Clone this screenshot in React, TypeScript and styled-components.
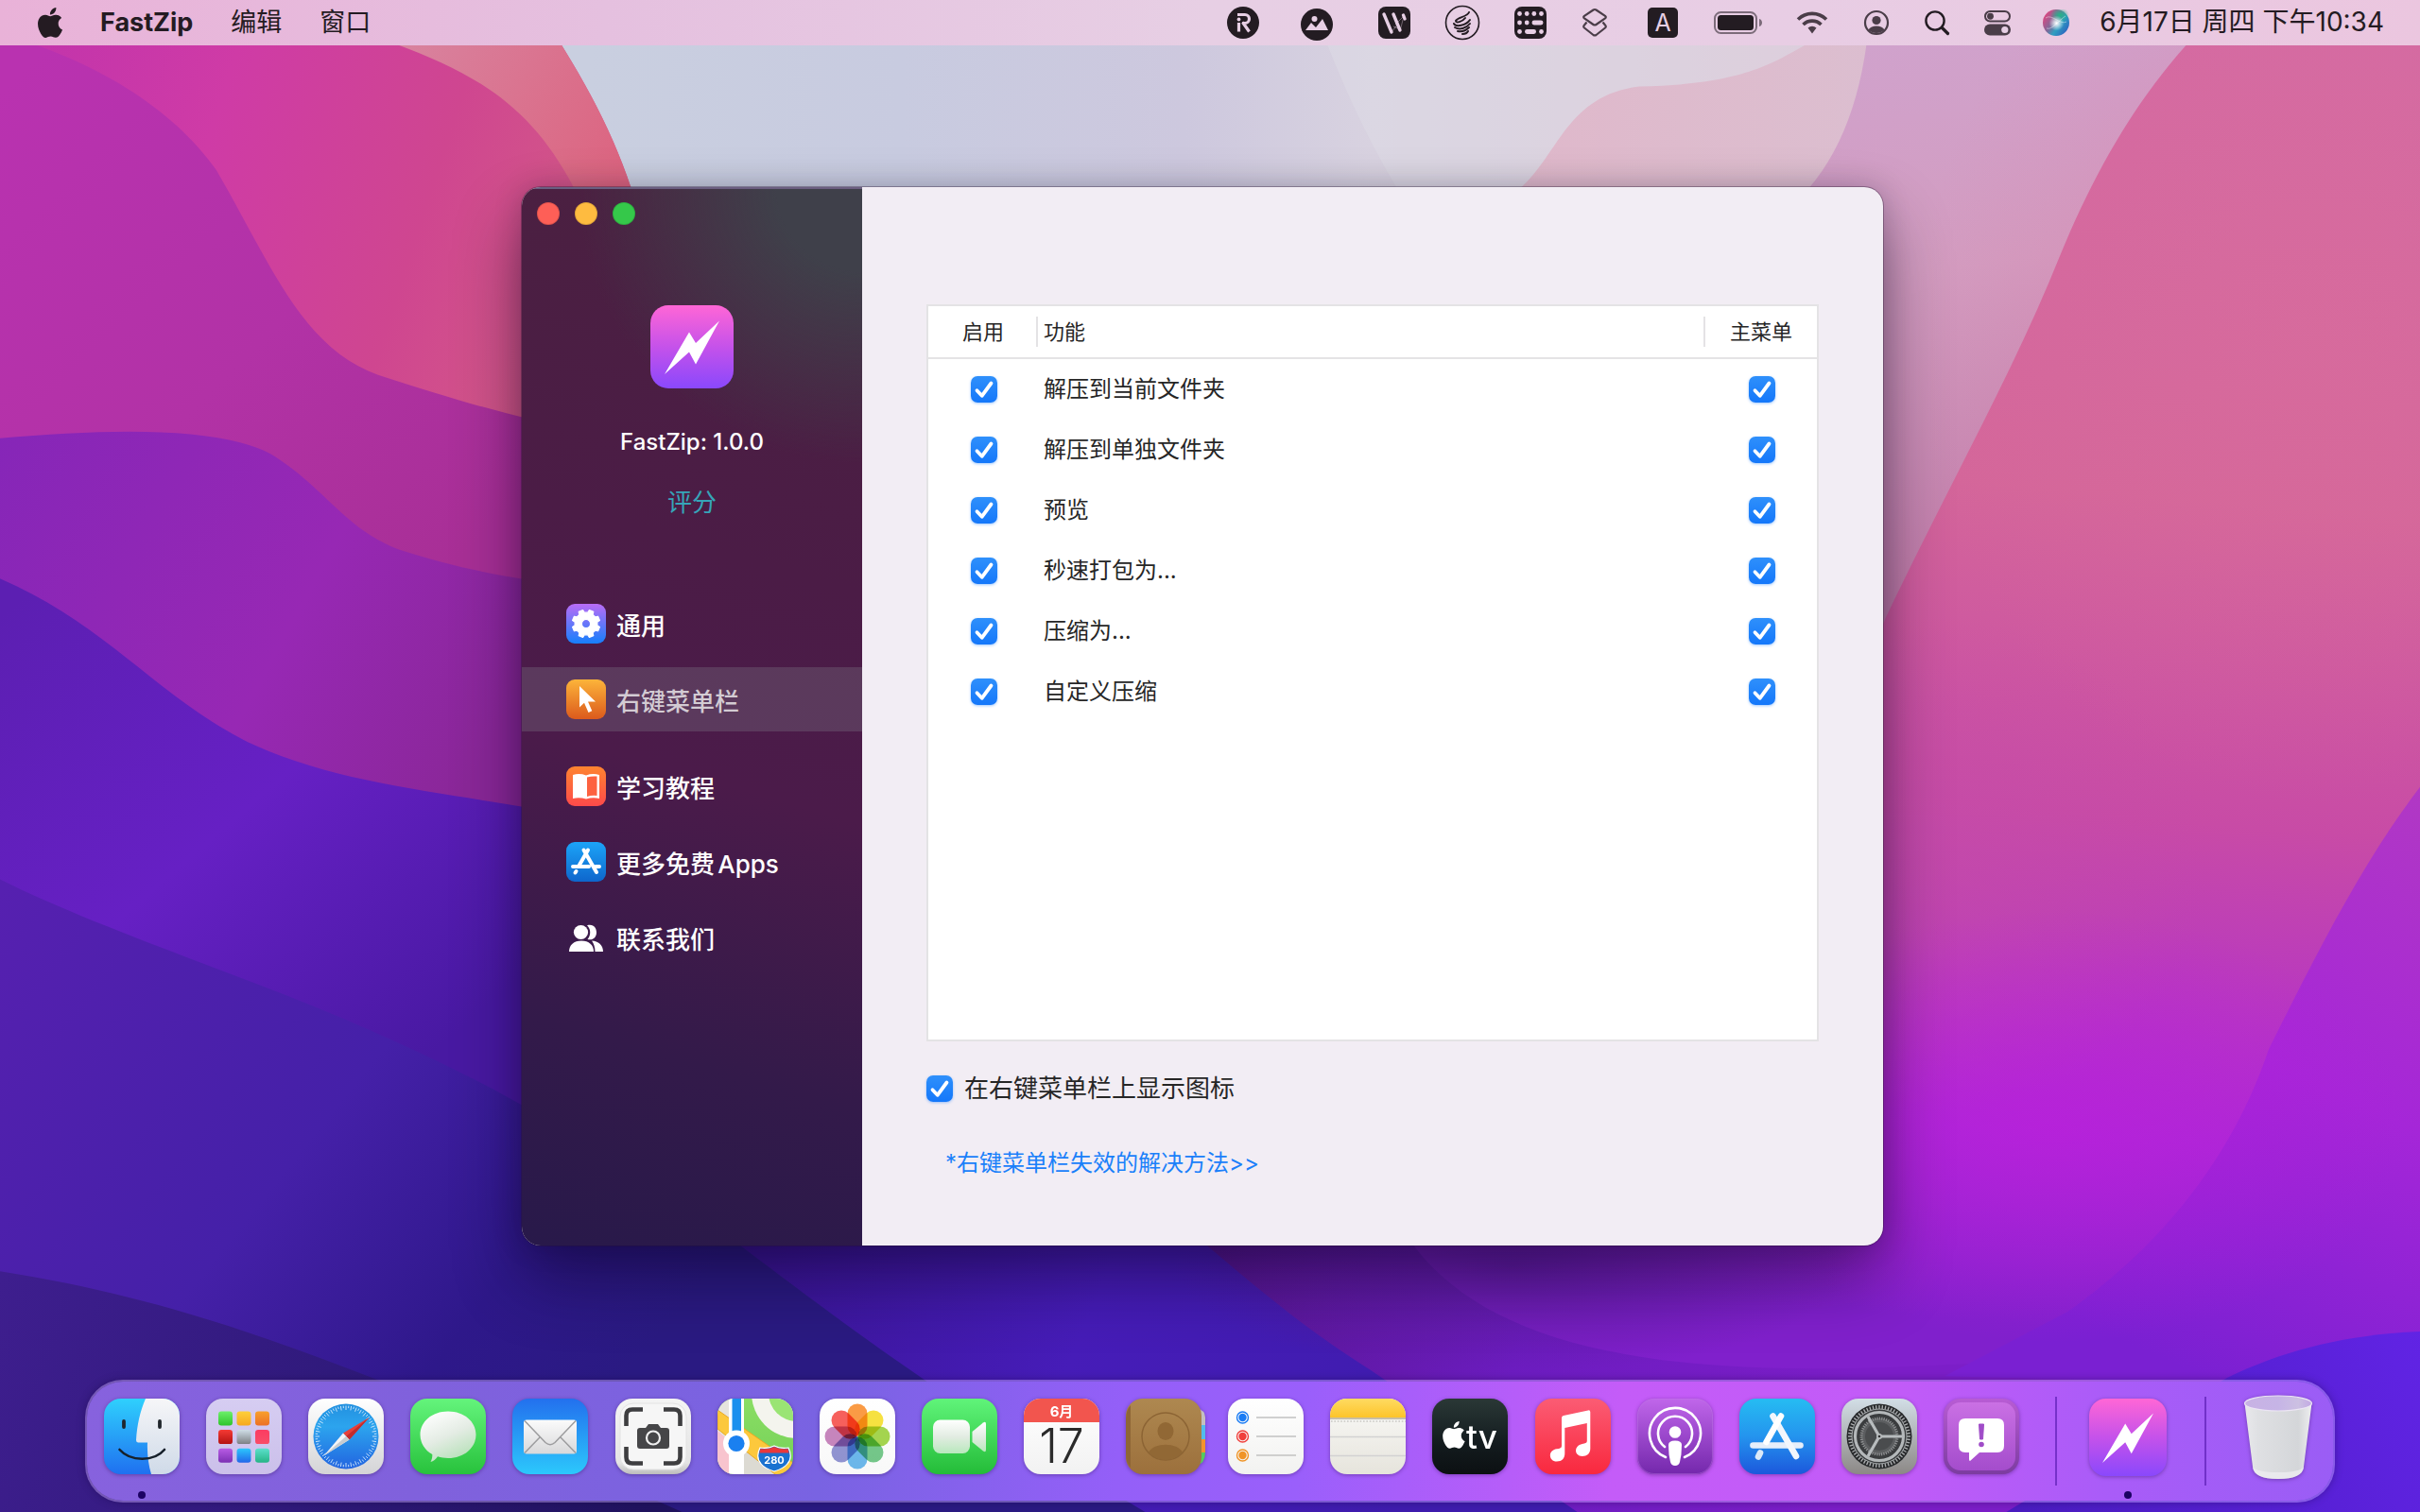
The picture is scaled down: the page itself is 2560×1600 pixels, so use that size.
import React, { useState } from "react";
import styled, { createGlobalStyle, css } from "styled-components";

const GlobalStyle = createGlobalStyle`
  *, *::before, *::after { box-sizing: border-box; }
  html, body { margin: 0; padding: 0; height: 100%; overflow: hidden; }
  body, button, input {
    font-family: Inter, "Noto Sans CJK SC", sans-serif;
  }
  button { border: 0; padding: 0; background: none; color: inherit; cursor: default; }
`;

/* ---------- desktop ---------- */

const Desktop = styled.div`
  position: relative;
  isolation: isolate;
  display: flex;
  flex-direction: column;
  min-height: 100vh;
  overflow: hidden;
`;

const WallpaperSvg = styled.svg`
  position: absolute;
  inset: 0;
  z-index: -1;
  width: 100%;
  height: 100%;
`;

const Stage = styled.main`
  flex: 1;
  display: flex;
  align-items: center;
  justify-content: center;
  padding: 8px 16px 0 0;
`;

type Stop = [number, string, number?];
const Lin = ({ id, v, stops, user }: { id: string; v?: number[]; stops: Stop[]; user?: boolean }) => {
  const [x1, y1, x2, y2] = v || [0, 0, 0, 1];
  return (
    <linearGradient id={id} x1={x1} y1={y1} x2={x2} y2={y2} gradientUnits={user ? "userSpaceOnUse" : "objectBoundingBox"}>
      {stops.map(([o, c, a], i) => (
        <stop key={i} offset={o} stopColor={c} stopOpacity={a ?? 1} />
      ))}
    </linearGradient>
  );
};
const Glow = ({ id, c, a = 1 }: { id: string; c: string; a?: number }) => (
  <radialGradient id={id}>
    <stop offset="0" stopColor={c} stopOpacity={a} />
    <stop offset="0.5" stopColor={c} stopOpacity={a * 0.5} />
    <stop offset="1" stopColor={c} stopOpacity={0} />
  </radialGradient>
);

const Wallpaper = () => (
  <WallpaperSvg viewBox="0 0 1568 980" preserveAspectRatio="xMidYMid slice" aria-hidden="true">
    <defs>
      <Lin id="wTop" user v={[380, 0, 1400, 0]} stops={[[0, "#c9cfe0"], [0.2, "#c8cbe0"], [0.38, "#cdc8de"], [0.5, "#d8d2e0"], [0.75, "#dcc3d4"], [1, "#d0a8d2"]]} />
      <Lin id="wPinkTop" user v={[0, 30, 400, 160]} stops={[[0, "#c033ac"], [0.35, "#cf3ba6"], [0.7, "#cf4690"], [1, "#d45c86"]]} />
      <Lin id="wCoral" user v={[250, 30, 400, 120]} stops={[[0, "#d884a0"], [1, "#dc6480"]]} />
      <Lin id="wA" user v={[0, 60, 300, 360]} stops={[[0, "#b932b0"], [0.55, "#b232a6"], [1, "#a82f96"]]} />
      <Lin id="wB" user v={[0, 280, 330, 460]} stops={[[0, "#8626b8"], [0.6, "#9728b4"], [1, "#8a2798"]]} />
      <Lin id="wC" user v={[0, 400, 260, 700]} stops={[[0, "#5c1fb2"], [0.5, "#6620c4"], [1, "#4819a2"]]} />
      <Lin id="wD" user v={[0, 580, 400, 900]} stops={[[0, "#5620b0"], [0.5, "#4520a8"], [0.8, "#2e188a"], [1, "#2a1a82"]]} />
      <Lin id="wE" user v={[0, 830, 420, 980]} stops={[[0, "#3e1e8e"], [0.5, "#301a7c"], [1, "#20135e"]]} />
      <Lin id="wF" user v={[480, 800, 900, 980]} stops={[[0, "#3a1596"], [0.5, "#461cb8"], [1, "#3f1cae"]]} />
      <Lin id="wG" user v={[780, 800, 1200, 900]} stops={[[0, "#561690"], [0.5, "#6c1cc0"], [1, "#7c1ec8"]]} />
      <Lin id="wRight" user v={[1400, 30, 1330, 860]} stops={[[0, "#d46aa2"], [0.35, "#d4669a"], [0.6, "#c84ba6"], [0.85, "#aa28d6"], [1, "#8020cc"]]} />
      <Lin id="wRight2" user v={[1568, 510, 1400, 880]} stops={[[0, "#b138c4"], [0.5, "#a526d8"], [1, "#7a20d2"]]} />
      <Lin id="wBlue" user v={[1300, 960, 1568, 830]} stops={[[0, "#4a1cc0"], [1, "#6224e6"]]} />
      <Lin id="wMid" user v={[1210, 30, 1260, 400]} stops={[[0, "#d0a2cc"], [0.4, "#d39cc0"], [1, "#c07aa8"]]} />
      <Lin id="wPale" user v={[1000, 60, 1200, 60]} stops={[[0, "#e0b2c6"], [1, "#dcbacc"]]} />
      <Glow id="wGlow1" c="#dc709c" a={0.35} />
      <Glow id="wGlow2" c="#bc1edc" a={0.65} />
      <Glow id="wGlow3" c="#5a1a9c" a={0.8} />
      <Glow id="wGlow4" c="#c44ca8" a={0.6} />
    </defs>
    <rect width="1568" height="980" fill="url(#wTop)" />
    <path d="M860 29 Q880 80 905 122 V400 H1300 V0 H846Z" fill="#dedce6" opacity="0.5" />
    <path d="M985 122 C1010 100 1015 62 1062 56 C1130 55 1150 40 1170 29 V0 H1300 V400 H960Z" fill="url(#wPale)" opacity="0.8" />
    <path d="M1212 0 Q1208 80 1172 122 V800 H1460 V0Z" fill="url(#wMid)" />
    {/* left ridges */}
    <path d="M0 0 H345 C375 45 395 80 409 122 V500 H0Z" fill="url(#wPinkTop)" />
    <path d="M200 0 H345 C375 45 395 80 409 122 H372 C345 70 310 48 255 28Z" fill="url(#wCoral)" />
    <path d="M0 22 C60 38 112 70 140 110 C175 170 195 225 245 243 C285 256 315 265 345 272 V560 H0Z" fill="url(#wA)" />
    <path d="M0 284 C70 278 140 276 175 294 C210 315 222 342 258 356 C290 366 315 372 345 376 V600 H0Z" fill="url(#wB)" />
    <path d="M0 375 C70 405 105 455 165 483 C220 508 290 514 345 524 V800 H0Z" fill="url(#wC)" />
    <path d="M0 570 C60 600 150 630 210 655 C270 680 310 700 345 720 L480 790 L780 990 H0Z" fill="url(#wD)" />
    {/* foreground hills */}
    <path d="M470 800 C520 838 560 868 600 895 L742 980 H1568 V760 H470Z" fill="url(#wF)" />
    <path d="M0 824 C90 838 160 862 228 888 C300 915 370 948 442 980 H0Z" fill="url(#wE)" />
    <path d="M770 797 C820 840 850 864 888 888 L1022 980 H1568 V700 H770Z" fill="url(#wG)" />
    {/* right ridges */}
    <path d="M1446 0 C1395 45 1362 100 1335 165 C1305 240 1265 310 1222 400 L1180 500 V780 H900 C940 870 1060 895 1250 885 L1568 870 V0Z" fill="url(#wRight)" />
    <path d="M1568 510 C1530 560 1500 620 1470 680 C1450 740 1410 800 1340 850 L1260 892 L1568 900Z" fill="url(#wRight2)" />
    <ellipse cx="1500" cy="220" rx="260" ry="300" fill="url(#wGlow1)" />
    <ellipse cx="1250" cy="560" rx="180" ry="160" fill="url(#wGlow4)" />
    <ellipse cx="1330" cy="730" rx="230" ry="140" fill="url(#wGlow2)" />
    <ellipse cx="980" cy="820" rx="220" ry="70" fill="url(#wGlow3)" />
    <path d="M1568 863 C1520 865 1480 875 1443 893 L1300 980 H1568Z" fill="url(#wBlue)" />
  </WallpaperSvg>
);

/* ---------- menu bar ---------- */

const MenuBar = styled.header`
  display: flex;
  align-items: center;
  justify-content: space-between;
  height: 48px;
  padding: 0 38px 0 40px;
  color: #241b22;
  background: linear-gradient(90deg, #e9b2d8 0%, #e5c0df 25%, #e7cfe4 50%, #e8cde4 75%, #ebc6df 100%);
`;

const MenuGroup = styled.nav`
  display: flex;
  align-items: center;
  height: 44px;
`;

const MenuButton = styled.button<{ $strong?: boolean }>`
  margin-left: 40px;
  font-size: 27px;
  line-height: 44px;
  font-weight: ${(p) => (p.$strong ? 700 : 400)};
`;

const StatusGroup = styled.div`
  display: flex;
  align-items: center;
  height: 48px;
`;

const StatusItem = styled.button<{ $slot: number }>`
  display: flex;
  align-items: center;
  justify-content: center;
  width: ${(p) => p.$slot}px;
  height: 48px;
`;

const Clock = styled.time`
  padding-left: 14px;
  font-size: 28px;
  line-height: 44px;
  margin-bottom: 2px;
  white-space: nowrap;
`;

const APPLE =
  "M12.152 6.896c-.948 0-2.415-1.078-3.96-1.04-2.04.027-3.91 1.183-4.961 3.014-2.117 3.675-.546 9.103 1.519 12.09 1.013 1.454 2.208 3.09 3.792 3.039 1.52-.065 2.09-.987 3.935-.987 1.831 0 2.35.987 3.96.948 1.637-.026 2.676-1.48 3.676-2.948 1.156-1.688 1.636-3.325 1.662-3.415-.039-.013-3.182-1.221-3.22-4.857-.026-3.04 2.48-4.494 2.597-4.559-1.429-2.09-3.623-2.324-4.39-2.376-2-.156-3.675 1.09-4.61 1.09zM15.53 3.83c.843-1.012 1.4-2.427 1.245-3.83-1.207.052-2.662.805-3.532 1.818-.78.896-1.454 2.338-1.273 3.714 1.338.104 2.715-.688 3.559-1.701";

const AppleLogo = () => (
  <svg width="26" height="32" viewBox="2.2 0 19.6 24" fill="#241b22" aria-hidden="true">
    <path d={APPLE} />
  </svg>
);

const INK = "#231c22";
const SOFT = "#4a3d48";
const PAPER = "#e7cfe4";

const statusIcons: { name: string; slot: number; art: React.ReactNode }[] = [
  {
    name: "录屏",
    slot: 64,
    art: (
      <svg width="36" height="36" viewBox="0 0 36 36">
        <circle cx="18" cy="18" r="17" fill={INK} />
        <path d="M12 9.500h8a4.500 4.500 0 0 1 0 9h-3M13.500 18v9.500M17.500 17.500L24.500 27.500" fill="none" stroke={PAPER} strokeWidth="3.200" />
        <circle cx="13.500" cy="14.500" r="1.900" fill={PAPER} />
      </svg>
    ),
  },
  {
    name: "图片",
    slot: 92,
    art: (
      <svg width="36" height="40" viewBox="0 0 36 40">
        <circle cx="18" cy="22" r="17" fill={INK} />
        <circle cx="15.500" cy="16" r="3" fill={PAPER} />
        <path d="M6 28l6-8 5 5 7-9 6 12z" fill={PAPER} />
      </svg>
    ),
  },
  {
    name: "壁纸",
    slot: 72,
    art: (
      <svg width="36" height="36" viewBox="0 0 36 36">
        <rect x="1" y="1" width="34" height="34" rx="8" fill={INK} />
        <path d="M7 9l8 19M17 9l7 17" stroke={PAPER} strokeWidth="3.400" strokeLinecap="round" />
        <path d="M29 10l-10 10M15 28l7-9M24 27l3-12M17 22l7 3" stroke={PAPER} strokeWidth="0.800" strokeOpacity="0.500" fill="none" />
        <path d="M27.500 10l1.500 4" stroke={PAPER} strokeWidth="3.400" strokeLinecap="round" />
      </svg>
    ),
  },
  {
    name: "清理",
    slot: 72,
    art: (
      <svg width="38" height="38" viewBox="0 0 38 38" fill="none" stroke={INK}>
        <circle cx="19" cy="19" r="17.500" strokeWidth="1.600" />
        <path d="M26 8c-2 5-12 5-14 9 0 3 7 1 10-3M10 20c2 4 13 2 17-4M11 24c5 3 12 1 16-4M14 28c5 1 9-1 12-4M19 31c3 0 5-1 6-3" strokeWidth="2" strokeLinecap="round" />
      </svg>
    ),
  },
  {
    name: "键盘",
    slot: 72,
    art: (
      <svg width="36" height="36" viewBox="0 0 36 36">
        <rect x="1" y="1" width="34" height="34" rx="8" fill={INK} />
        <g fill={PAPER}>
          {[6.5, 14.2, 21.8, 29.5].map((x) => (
            <circle key={x} cx={x} cy="8.500" r="2.400" />
          ))}
          <circle cx="6.500" cy="18" r="2.400" />
          <circle cx="14.200" cy="18" r="2.400" />
          <rect x="19.500" y="15.600" width="12" height="4.800" rx="2.400" />
          <circle cx="6.500" cy="27.500" r="2.400" />
          <rect x="12" y="25.100" width="12" height="4.800" rx="2.400" />
          <circle cx="29.500" cy="27.500" r="2.400" />
        </g>
      </svg>
    ),
  },
  {
    name: "图层",
    slot: 64,
    art: (
      <svg width="30" height="32" viewBox="0 0 30 32" fill="none" stroke={SOFT} strokeWidth="2.200" strokeLinejoin="round">
        <path d="M13.500 2.500L4 8.800q-1.600 1.300 0 2.600l9.500 6.600q1.500 1 3 0L26 11.400q1.600-1.300 0-2.600L16.500 2.500q-1.500-1-3 0z" />
        <path d="M6.500 15.500L4 18.500q-1.600 1.600 0 3l9.500 7.500q1.500 1 3 0l9.500-7.500q1.600-1.400 0-3l-2.500-3" />
      </svg>
    ),
  },
  {
    name: "输入法",
    slot: 80,
    art: (
      <svg width="32" height="32" viewBox="0 0 32 32">
        <rect width="32" height="32" rx="5" fill={INK} />
        <text x="16" y="25" textAnchor="middle" fontFamily="Inter, sans-serif" fontSize="25" fill={PAPER}>A</text>
      </svg>
    ),
  },
  {
    name: "电池",
    slot: 80,
    art: (
      <svg width="52" height="24" viewBox="0 0 52 24">
        <rect x="1" y="1" width="44" height="22" rx="6.500" fill="none" stroke={INK} strokeOpacity="0.55" strokeWidth="2" />
        <rect x="4" y="4" width="38" height="16" rx="3.500" fill={INK} />
        <path d="M48 8v8c4-1 4-7 0-8z" fill={INK} opacity="0.550" />
      </svg>
    ),
  },
  {
    name: "无线网络",
    slot: 76,
    art: (
      <svg width="34" height="26" viewBox="0 0 34 26" fill="none" stroke={SOFT} strokeWidth="3.600">
        <path d="M2 9.500a21.500 21.500 0 0 1 30 0" />
        <path d="M7.500 15a13.600 13.600 0 0 1 19 0" />
        <path d="M12.500 18.500a7 7 0 0 1 9 0L17 24.500z" fill={SOFT} stroke="none" />
      </svg>
    ),
  },
  {
    name: "用户",
    slot: 60,
    art: (
      <svg width="28" height="28" viewBox="0 0 28 28">
        <circle cx="14" cy="14" r="12" fill="none" stroke={SOFT} strokeWidth="2.200" />
        <circle cx="14" cy="11.500" r="4.600" fill={SOFT} />
        <path d="M5.500 21.500c3-5.500 14-5.500 17 0a12 12 0 0 1-17 0z" fill={SOFT} />
      </svg>
    ),
  },
  {
    name: "搜索",
    slot: 68,
    art: (
      <svg width="28" height="28" viewBox="0 0 28 28" fill="none" stroke={INK} strokeLinecap="round">
        <circle cx="12" cy="12" r="9.600" strokeWidth="2.400" />
        <path d="M19.500 19.500l6 6" strokeWidth="3.200" />
      </svg>
    ),
  },
  {
    name: "控制中心",
    slot: 60,
    art: (
      <svg width="28" height="28" viewBox="0 0 28 28">
        <rect x="1" y="2" width="26" height="10.500" rx="5.250" fill="none" stroke={SOFT} strokeWidth="2" />
        <circle cx="6.500" cy="7.250" r="3.400" fill={SOFT} />
        <rect x="0" y="15.500" width="28" height="12" rx="6" fill={SOFT} />
        <circle cx="21.800" cy="21.500" r="3.600" fill={PAPER} />
      </svg>
    ),
  },
  {
    name: "Siri",
    slot: 64,
    art: (
      <svg width="28" height="28" viewBox="0 0 28 28">
        <defs>
          <Lin id="siriBg" v={[0, 0.2, 1, 0.9]} stops={[[0, "#e8437e"], [0.4, "#7c6a9a"], [0.6, "#2f9fc0"], [1, "#2c55c0"]]} />
          <Glow id="siriGreen" c="#22b488" />
          <Glow id="siriWhite" c="#ffffff" />
        </defs>
        <circle cx="14" cy="14" r="14" fill="url(#siriBg)" />
        <ellipse cx="18" cy="6" rx="10" ry="8" fill="url(#siriGreen)" />
        <circle cx="14.500" cy="14.500" r="8" fill="url(#siriWhite)" />
        <path d="M3 9c6-5 16 8 22 4M4 20c6 2 12-8 20-13" stroke="#fff" strokeOpacity="0.4" fill="none" />
      </svg>
    ),
  },
];

/* ---------- window ---------- */

const Window = styled.section`
  display: flex;
  width: 1440px;
  max-width: 100%;
  min-height: 1120px;
  border-radius: 20px;
  overflow: hidden;
  background: #f2edf4;
  box-shadow: 0 0 0 1px rgba(40, 20, 50, 0.35), 0 36px 70px rgba(10, 0, 30, 0.45), 0 0 30px rgba(10, 0, 30, 0.2);
`;

const Sidebar = styled.aside`
  flex: 0 0 360px;
  display: flex;
  flex-direction: column;
  border-top: 2px solid rgba(255, 255, 255, 0.3);
  background:
    radial-gradient(ellipse 300px 290px at 100% 0, #3f404a 30%, rgba(63, 64, 74, 0) 100%),
    linear-gradient(196deg, #4b2140 0%, #4b1c46 35%, #4b1b4a 55%, #331a4a 80%, #28194a 100%);
`;

const TrafficLights = styled.div`
  display: flex;
  gap: 16px;
  padding: 14px 16px 0;
`;

const Light = styled.button<{ $color: string }>`
  width: 24px;
  height: 24px;
  border-radius: 50%;
  background: ${(p) => p.$color};
  box-shadow: inset 0 0 0 1px rgba(0, 0, 0, 0.12);
`;

const About = styled.div`
  display: flex;
  flex-direction: column;
  align-items: center;
  padding-top: 85px;
  color: #fff;
`;

const Version = styled.p`
  margin: 41px 0 0;
  font-size: 24px;
  line-height: 32px;
  font-weight: 500;
`;

const RateLink = styled.a`
  margin-top: 28px;
  font-size: 26px;
  line-height: 40px;
  color: #36a5b9;
  text-decoration: none;
`;

const NavList = styled.nav`
  display: flex;
  flex-direction: column;
  gap: 12px;
  margin-top: 74px;
`;

const NavItem = styled.button<{ $active?: boolean; $spaced?: boolean }>`
  display: flex;
  align-items: center;
  gap: 11px;
  height: 68px;
  padding-left: 47px;
  color: #fff;
  font-size: 26px;
  font-weight: 500;
  line-height: 40px;
  text-autospace: normal;
  ${(p) => p.$spaced && css`margin-top: 12px;`}
  ${(p) =>
    p.$active &&
    css`
      color: #d3cbd3;
      background: rgba(128, 128, 138, 0.3);
    `}
`;

const NavLabel = styled.span`
  padding-top: 6px;
`;

const Panel = styled.div`
  flex: 1;
  display: flex;
  flex-direction: column;
  align-items: flex-start;
  min-width: 0;
  padding: 124px 68px 64px;
  color: #262626;
`;

const TableFrame = styled.div`
  align-self: stretch;
  min-height: 780px;
  border: 2px solid #e4e3e5;
  background: #fff;
`;

const Table = styled.table`
  width: 100%;
  border-collapse: separate;
  border-spacing: 0;
  table-layout: fixed;
`;

const Th = styled.th<{ $w?: number; $divider?: boolean; $center?: boolean }>`
  width: ${(p) => (p.$w ? `${p.$w}px` : "auto")};
  height: 56px;
  padding: ${(p) => (p.$center ? "0" : "0 0 0 6px")};
  border-bottom: 2px solid #e4e3e5;
  font-size: 22px;
  line-height: 32px;
  font-weight: 400;
  text-align: ${(p) => (p.$center ? "center" : "left")};
  ${(p) =>
    p.$divider &&
    css`
      background: linear-gradient(#e4e3e5, #e4e3e5) right center / 2px 32px no-repeat;
    `}
`;

const Td = styled.td<{ $center?: boolean }>`
  height: 64px;
  padding: 0 0 0 ${(p) => (p.$center ? 2 : 6)}px;
  font-size: 24px;
  line-height: 32px;
  text-align: ${(p) => (p.$center ? "center" : "left")};
`;

const tick =
  "url(\"data:image/svg+xml,%3Csvg xmlns='http://www.w3.org/2000/svg' viewBox='0 0 28 28'%3E%3Cpath d='M6.500 15.200l5.200 5.600L21.500 7.500' fill='none' stroke='white' stroke-width='3.800' stroke-linecap='round' stroke-linejoin='round'/%3E%3C/svg%3E\")";

const CheckBox = styled.input.attrs({ type: "checkbox" })`
  appearance: none;
  display: block;
  flex: none;
  width: 28px;
  height: 28px;
  margin: 0;
  border-radius: 7px;
  background: #fff;
  box-shadow: inset 0 0 0 1px #c8c6ca;
  &:checked {
    background: ${tick}, linear-gradient(#2f90fb, #1477fa);
    box-shadow: 0 1px 3px rgba(20, 119, 250, 0.4);
  }
`;

const CenteredCheck = styled(CheckBox)`
  margin: 0 auto;
`;

const OptionLabel = styled.label`
  display: flex;
  align-items: center;
  gap: 12px;
  margin-top: 30px;
  font-size: 26px;
  line-height: 40px;
`;

const HelpLink = styled.a`
  margin: 41px 0 0 20px;
  color: #1a80fa;
  font-size: 24px;
  line-height: 36px;
  text-decoration: none;
`;

const Bolt = ({ size, id }: { size: number; id: string }) => (
  <svg width={size} height={size} viewBox="0 0 88 88" aria-hidden="true">
    <defs>
      <Lin id={id} stops={[[0, "#ff66d6"], [0.5, "#c552ea"], [1, "#8a48fc"]]} />
    </defs>
    <rect width="88" height="88" rx="19" fill={`url(#${id})`} />
    <path d="M73 16.500L48 62.500 41 49.500 15 73 41 28.500 48 40z" fill="#fff" />
  </svg>
);

const gearPath = (() => {
  const pts: string[] = [];
  for (let i = 0; i < 8; i++) {
    const a = (i * Math.PI) / 4 + Math.PI / 8;
    [[-0.24, 12], [-0.16, 14.8], [0.16, 14.8], [0.24, 12]].forEach(([d, r]) => {
      pts.push(`${(21 + r * Math.cos(a + d)).toFixed(2)} ${(21 + r * Math.sin(a + d)).toFixed(2)}`);
    });
  }
  return `M${pts.join("L")}Z M25.600 21a4.600 4.600 0 1 0-9.200 0a4.600 4.600 0 1 0 9.200 0Z`;
})();

const NavTile = ({ id, from, to, children }: { id: string; from: string; to: string; children: React.ReactNode }) => (
  <svg width="42" height="42" viewBox="0 0 42 42" aria-hidden="true">
    <defs>
      <Lin id={id} stops={[[0, from], [1, to]]} />
    </defs>
    <rect width="42" height="42" rx="9" fill={`url(#${id})`} />
    {children}
  </svg>
);

const navItems: { label: string; icon: React.ReactNode; spaced?: boolean }[] = [
  {
    label: "通用",
    icon: (
      <NavTile id="nGear" from="#b96cf6" to="#1680fc">
        <path d={gearPath} fill="#fff" fillRule="evenodd" stroke="#fff" strokeWidth="1.200" strokeLinejoin="round" />
      </NavTile>
    ),
  },
  {
    label: "右键菜单栏",
    icon: (
      <NavTile id="nCursor" from="#fcb43a" to="#dc5a1c">
        <path d="M14 7v22.500l5-4.800 4.500 10.300 3.800-1.800-4.300-9.700h8z" fill="#fff" />
      </NavTile>
    ),
  },
  {
    label: "学习教程",
    spaced: true,
    icon: (
      <NavTile id="nBook" from="#fe8430" to="#fd4a4a">
        <path d="M7 9q7-2 14 0.500Q28 7 35 9v25q-7-1.500-14 0.500Q14 32.500 7 34z" fill="#fff" />
        <path d="M22 11.500q5-1.500 10.500-1V31q-5.500-.7-10.500 1z" fill="#fd6240" />
      </NavTile>
    ),
  },
  {
    label: "更多免费Apps",
    icon: (
      <NavTile id="nStore" from="#1ca4f8" to="#0e66cc">
        <g stroke="#fff" strokeWidth="4" strokeLinecap="round">
          <path d="M23 8.500L13.500 25M18.500 8.500L32 32M7 26h17M31 26h4M10.500 31l-1 1.500" />
        </g>
      </NavTile>
    ),
  },
  {
    label: "联系我们",
    icon: (
      <svg width="42" height="42" viewBox="0 0 42 42" aria-hidden="true">
        <g fill="#fff">
          <path d="M22 8.200c7-2 10 3 10 7.500 0 5-4 9-9.500 7.200 4-4.500 3.500-11-.5-14.700z" />
          <path d="M27 24.500c7 .5 12 4.500 12 11.500h-8.500c0-5-1.500-8.500-3.500-11.500z" />
          <circle cx="15.500" cy="15.500" r="7.600" />
          <path d="M3 36c0-7 5-11.500 13-11.500S29 29 29 36z" />
        </g>
      </svg>
    ),
  },
];

const features = ["解压到当前文件夹", "解压到单独文件夹", "预览", "秒速打包为...", "压缩为...", "自定义压缩"];

/* ---------- dock ---------- */

const Dock = styled.footer`
  display: flex;
  align-items: flex-start;
  height: 130px;
  margin: 0 90px 10px;
  padding: 18px 22px 0 18px;
  border: 2px solid rgba(210, 180, 255, 0.4);
  border-radius: 40px;
  background: linear-gradient(96deg, #8762de 0%, #8061dc 15%, #7963e2 33%, #945ff8 46%, #9a5ffb 54%, #c45cf8 68%, #c25bf8 80%, #a95cf8 90%, #9a5df5 100%);
  background-clip: padding-box;
  background-origin: border-box;
  box-shadow: 0 0 8px rgba(20, 0, 60, 0.35);
`;

const DockApps = styled.div`
  flex: 1;
  display: flex;
  justify-content: space-between;
`;

const DockButton = styled.button<{ $w?: number }>`
  display: flex;
  flex-direction: column;
  align-items: center;
  width: ${(p) => p.$w || 80}px;
  height: 108px;
  svg {
    display: block;
    overflow: visible;
    filter: drop-shadow(0 1px 2px rgba(30, 0, 60, 0.35));
  }
`;

const TrashButton = styled(DockButton)`
  margin-top: -4px;
`;

const RunningDot = styled.span`
  width: 8px;
  height: 8px;
  margin-top: auto;
  margin-bottom: 2px;
  border-radius: 50%;
  background: #1c0263;
`;

const Divider = styled.span<{ $before: number; $after: number }>`
  width: 2px;
  height: 94px;
  margin: -2px ${(p) => p.$after}px 0 ${(p) => p.$before}px;
  background: rgba(80, 20, 170, 0.6);
`;

const Tile = ({ id, stops, v, children, stroke }: { id: string; stops: Stop[]; v?: number[]; children?: React.ReactNode; stroke?: string }) => (
  <svg width="80" height="80" viewBox="0 0 80 80" aria-hidden="true">
    <defs>
      <Lin id={id} v={v} stops={stops} />
      <clipPath id={`${id}C`}>
        <rect width="80" height="80" rx="18" />
      </clipPath>
    </defs>
    <rect width="80" height="80" rx="18" fill={`url(#${id})`} />
    <g clipPath={`url(#${id}C)`}>{children}</g>
    {stroke && <rect x="0.500" y="0.500" width="79" height="79" rx="17.500" fill="none" stroke={stroke} />}
  </svg>
);

const ring = (n: number, r1: number, r2: number, off = 0) => {
  let d = "";
  for (let i = 0; i < n; i++) {
    const a = ((i + off) * 2 * Math.PI) / n;
    d += `M${(40 + r1 * Math.cos(a)).toFixed(2)} ${(40 + r1 * Math.sin(a)).toFixed(2)}L${(40 + r2 * Math.cos(a)).toFixed(2)} ${(40 + r2 * Math.sin(a)).toFixed(2)}`;
  }
  return d;
};

const launchColors = [
  ["#6df06a", "#2fc42c"], ["#fdd03a", "#f6a820"], ["#f8a02c", "#ec7026"],
  ["#f43a34", "#b41212"], ["#cfdde6", "#7c8084"], ["#fb3c62", "#f94c68"],
  ["#b85ce4", "#7c30b4"], ["#2cc8fc", "#2266ea"], ["#5ce0cc", "#26b486"],
];

const petals = ["#f98a24", "#f4dc1e", "#94cc30", "#5cbc74", "#52aae6", "#7c80c8", "#bc70b0", "#f44440"];

const dockApps: { name: string; running?: boolean; art: React.ReactNode }[] = [
  {
    name: "访达",
    running: true,
    art: (
      <Tile id="finder" stops={[[0, "#2fd0fd"], [1, "#1f70f0"]]}>
        <defs>
          <Lin id="finderR" stops={[[0, "#f6f6f8"], [1, "#cfdae8"]]} />
        </defs>
        <path d="M44 0C38 14 35 28 34 44q0 2 2 2.500h10C45.500 58 47 70 50 80H80V0z" fill="url(#finderR)" />
        <path d="M21 24v6M59 24v6" stroke="#20262c" strokeWidth="3.800" strokeLinecap="round" />
        <path d="M16.500 54C28 67 53 67 64 54" fill="none" stroke="#16202a" strokeWidth="2.600" strokeLinecap="round" />
      </Tile>
    ),
  },
  {
    name: "启动台",
    art: (
      <Tile id="launch" stops={[[0, "#d6cdf2"], [1, "#cbc0ea"]]}>
        <defs>
          {launchColors.map(([a, b], i) => (
            <Lin key={i} id={`lp${i}`} stops={[[0, a], [1, b]]} />
          ))}
        </defs>
        {launchColors.map((_, i) => (
          <rect key={i} x={13 + (i % 3) * 19.5} y={13.5 + Math.floor(i / 3) * 19.6} width="15" height="15" rx="3.200" fill={`url(#lp${i})`} />
        ))}
      </Tile>
    ),
  },
  {
    name: "Safari",
    art: (
      <Tile id="safari" stops={[[0, "#ffffff"], [1, "#d4d4d6"]]}>
        <defs>
          <Lin id="safariB" stops={[[0, "#2290e0"], [0.35, "#2ca4ee"], [1, "#2264e0"]]} />
        </defs>
        <circle cx="40" cy="40" r="34.500" fill="url(#safariB)" />
        <path d={ring(36, 28, 32.5)} stroke="#d8ecfc" strokeWidth="0.900" />
        <path d={ring(36, 30, 32.5, 0.5)} stroke="#d8ecfc" strokeWidth="0.900" />
        <path d="M64.500 20L37 36.500l6.500 7z" fill="#e8403a" />
        <path d="M64.500 20L43.500 43.500 40 40z" fill="#c22c2c" />
        <path d="M16.500 60.500L37 36.500l6.500 7z" fill="#f4f4f6" />
        <path d="M16.500 60.500L40 40l3.500 3.500z" fill="#c8ccd0" />
      </Tile>
    ),
  },
  {
    name: "信息",
    art: (
      <Tile id="msg" stops={[[0, "#64f47c"], [1, "#28c23c"]]}>
        <defs>
          <Lin id="msgB" v={[0.2, 0, 0.7, 1]} stops={[[0, "#ffffff"], [0.5, "#e4ece4"], [1, "#b4e0b6"]]} />
        </defs>
        <path d="M40 13.500c17 0 29.500 11 29.500 24.700S57 63 40 63c-4 0-7.500-.5-11-1.700-2 3-4.500 5-7.500 5.700 1.200-2 2-5 1.800-8C15.500 54.500 10.500 47 10.500 38.200 10.500 24.500 23 13.500 40 13.500z" fill="url(#msgB)" />
      </Tile>
    ),
  },
  {
    name: "邮件",
    art: (
      <Tile id="mail" stops={[[0, "#2370ee"], [1, "#2cc8fc"]]}>
        <defs>
          <Lin id="mailE" stops={[[0, "#fbfbfb"], [1, "#d8d8da"]]} />
        </defs>
        <rect x="12" y="22.500" width="56" height="36" rx="3" fill="url(#mailE)" />
        <path d="M13 57.500L29 41M67 57.500L51 41M13 23.500l22 23q5 4.500 10 0l22-23" fill="none" stroke="#9c9c9e" strokeWidth="1.500" />
      </Tile>
    ),
  },
  {
    name: "截屏",
    art: (
      <Tile id="shot" stops={[[0, "#f4f4f4"], [0.85, "#e4e4e4"], [1, "#bcbcbc"]]}>
        <rect x="5" y="5" width="70" height="70" rx="14" fill="#f6f6f6" stroke="#e2e2e2" />
        <path d="M11.500 29V18q0-6.500 6.500-6.500h11M51 11.500h11q6.500 0 6.500 6.500v11M68.500 51v11q0 6.500-6.500 6.500H51M29 68.500H18q-6.500 0-6.500-6.500V51" fill="none" stroke="#3e3e40" strokeWidth="4.600" />
        <path d="M26 31h6l3-4h10l3 4h6q3 0 3 3v16q0 3-3 3H26q-3 0-3-3V34q0-3 3-3z" fill="#464648" />
        <circle cx="40" cy="41.500" r="7" fill="#464648" stroke="#f0f0f0" strokeWidth="2.200" />
      </Tile>
    ),
  },
  {
    name: "地图",
    art: (
      <Tile id="maps" stops={[[0, "#8ade64"], [1, "#74d058"]]}>
        <circle cx="84" cy="-6" r="48" fill="#f4f4ee" />
        <circle cx="84" cy="-6" r="30" fill="#9ae474" />
        <path d="M0 0h12v80H0z" fill="#e6e4de" />
        <path d="M0 34l14 12v34H0z" fill="#f8c4ce" />
        <path d="M28 50l36 30H28z" fill="#dcdad2" />
        <path d="M0 12L80 68v16H66L0 32z" fill="#fcc83c" stroke="#e8a824" strokeWidth="1" />
        <path d="M12 0h16v80H12z" fill="#fff" />
        <path d="M15.500 0h9.500v48h-9.500z" fill="#1a90ee" />
        <circle cx="20" cy="47.500" r="14" fill="#fff" />
        <circle cx="20" cy="47.500" r="8.600" fill="#1a80f0" />
        <path d="M45 52q8 1.500 15-2 7 3.500 15 2 5 10-1 17-4 5-14 8-10-3-14-8-6-7-1-17z" fill="#1a72d0" stroke="#fff" strokeWidth="1.200" />
        <path d="M45.500 53q7.500 1.200 14.500-2 7 3.200 14.500 2l1.200 4.500H44.300z" fill="#e8383c" />
        <text x="60" y="69" textAnchor="middle" fontFamily="Inter, sans-serif" fontSize="11" fontWeight="700" fill="#fff">280</text>
      </Tile>
    ),
  },
  {
    name: "照片",
    art: (
      <Tile id="photos" stops={[[0, "#ffffff"], [1, "#f8f8f8"]]}>
        <g style={{ isolation: "isolate" }}>
          {petals.map((c, i) => (
            <rect key={c} x="29.500" y="5.500" width="21" height="34" rx="10.500" fill={c} fillOpacity="0.850" transform={`rotate(${i * 45} 40 40)`} style={{ mixBlendMode: "multiply" }} />
          ))}
        </g>
      </Tile>
    ),
  },
  {
    name: "FaceTime",
    art: (
      <Tile id="face" stops={[[0, "#60f47a"], [1, "#24bc38"]]}>
        <defs>
          <Lin id="faceB" stops={[[0, "#ffffff"], [0.5, "#e2ece2"], [1, "#b8e8bc"]]} />
        </defs>
        <rect x="12" y="22.500" width="39" height="35.500" rx="7.500" fill="url(#faceB)" />
        <path d="M53.500 35L65 25.500q3-2 3 1.500v27q0 3.500-3 1.500L53.500 46z" fill="url(#faceB)" />
      </Tile>
    ),
  },
  {
    name: "日历",
    art: (
      <Tile id="cal" stops={[[0, "#ffffff"], [1, "#f2f2f2"]]}>
        <rect width="80" height="25" fill="#f2554e" />
        <text x="40" y="19" textAnchor="middle" fontFamily='Inter, "Noto Sans CJK SC", sans-serif' fontSize="15" fontWeight="700" fill="#fff">6月</text>
        <text x="40" y="68" textAnchor="middle" fontFamily="Inter, sans-serif" fontSize="50" fontWeight="300" fill="#2a2a2a">17</text>
      </Tile>
    ),
  },
  {
    name: "通讯录",
    art: (
      <svg width="80" height="80" viewBox="0 0 80 80" aria-hidden="true">
        <defs>
          <Lin id="contact" stops={[[0, "#ae8850"], [1, "#9c703c"]]} />
        </defs>
        <path d="M74 10q10 2 10 10v8H74z" fill="#c4c0c0" />
        <path d="M74 28h10v15H74z" fill="#52bcec" />
        <path d="M74 43h10v14H74z" fill="#f4942e" />
        <path d="M74 57h10q0 12-10 14z" fill="#54cc5e" />
        <rect width="80" height="80" rx="18" fill="url(#contact)" />
        <path d="M5 7q-5 5-5 15v36q0 10 5 15z" fill="#8e6636" />
        <circle cx="42" cy="40" r="25" fill="none" stroke="#8c6434" strokeWidth="1.500" />
        <ellipse cx="42" cy="34.500" rx="8.500" ry="9.500" fill="#916835" />
        <path d="M24 57c5-11 31-11 36 0a25 25 0 0 1-36 0z" fill="#916835" />
      </svg>
    ),
  },
  {
    name: "提醒事项",
    art: (
      <Tile id="rem" stops={[[0, "#ffffff"], [1, "#f2f2f0"]]}>
        {["#1a7cf4", "#f0403c", "#f09426"].map((c, i) => (
          <g key={c}>
            <circle cx="15.500" cy={20 + i * 20} r="6" fill="none" stroke={c} strokeWidth="1.400" />
            <circle cx="15.500" cy={20 + i * 20} r="4.200" fill={c} />
            <path d={`M30 ${20 + i * 20}h42`} stroke="#c2c2c2" strokeWidth="1.500" />
          </g>
        ))}
      </Tile>
    ),
  },
  {
    name: "备忘录",
    art: (
      <Tile id="notes" stops={[[0, "#fafaf8"], [1, "#e6e4dc"]]}>
        <defs>
          <Lin id="notesY" stops={[[0, "#fedb62"], [1, "#fdc42a"]]} />
        </defs>
        <rect width="80" height="20" fill="url(#notesY)" />
        <path d="M0 21h80" stroke="#b8ac8c" strokeWidth="1.500" />
        <path d="M1 24h80" stroke="#c8c8c4" strokeWidth="1.600" strokeDasharray="1.600 1.800" />
        <path d="M0 40.500h80M0 60.500h80" stroke="#d2d2d2" strokeWidth="1.400" />
      </Tile>
    ),
  },
  {
    name: "视频",
    art: (
      <Tile id="tv" stops={[[0, "#2a3836"], [0.6, "#131b1e"], [1, "#0c1012"]]}>
        <g transform="translate(8.500 24) scale(1.200)" fill="#fff">
          <path d={APPLE} />
        </g>
        <text x="36" y="52.500" fontFamily="Inter, sans-serif" fontSize="35" fontWeight="500" fill="#fff">tv</text>
      </Tile>
    ),
  },
  {
    name: "音乐",
    art: (
      <Tile id="music" stops={[[0, "#fb5c74"], [1, "#f9283e"]]}>
        <path d="M28 20.500q0-2 2-2.400L56 12.400q2.300-.4 2.300 1.800V53c0 5-3.500 8-8.500 8-9 0-9-11.500 0-13 3-.5 5-1 5-3V26l-23.500 5v27c0 5-3 8.500-8.500 8.500-9 0-9.500-12 0-13.200 3.500-.5 5.200-1 5.200-3.300z" fill="#fff" />
      </Tile>
    ),
  },
  {
    name: "播客",
    art: (
      <Tile id="pod" stops={[[0, "#c066ea"], [1, "#7428ac"]]} stroke="rgba(190,120,230,.4)">
        <g fill="none" stroke="#fff" strokeWidth="2.600" strokeLinecap="round">
          <path d="M30 62A27 27 0 1 1 50 62" />
          <path d="M29 51A18 18 0 1 1 51 51" />
        </g>
        <circle cx="40" cy="35.500" r="6.300" fill="#fff" />
        <path d="M33 49q0-4.500 7-4.500t7 4.500q0 10-2 18-1 4-5 4t-5-4q-2-8-2-18z" fill="#fff" />
      </Tile>
    ),
  },
  {
    name: "App Store",
    art: (
      <Tile id="store" stops={[[0, "#26bcf2"], [0.5, "#2494ee"], [1, "#1c58dc"]]}>
        <g strokeLinecap="round" strokeWidth="6.600">
          <path d="M22 57.500L20 61.500" stroke="#dbe9f8" />
          <path d="M14.500 49.500h50" stroke="#e6eefa" />
          <path d="M35.500 18.500L60 61" stroke="#f2f6fc" />
          <path d="M44 18.500L28.500 46" stroke="#fff" />
        </g>
      </Tile>
    ),
  },
  {
    name: "系统偏好设置",
    art: (
      <Tile id="settings" stops={[[0, "#d2dee6"], [1, "#8c8886"]]}>
        <circle cx="40" cy="40" r="34.500" fill="#26282a" />
        <path d={ring(60, 29, 33)} stroke="#a8aaac" strokeWidth="1.400" />
        <circle cx="40" cy="40" r="29" fill="#3a3c3e" stroke="#a2a6a8" strokeWidth="1" />
        <circle cx="40" cy="40" r="19" fill="#5c5e60" stroke="#8e9092" strokeWidth="3" strokeDasharray="1.200 1.200" />
        <circle cx="40" cy="40" r="15" fill="#4a4c4e" />
        <circle cx="40" cy="40" r="25.500" fill="none" stroke="#b4b8ba" strokeWidth="3.200" />
        <path d="M40 40h24M40 40L28 19M40 40L28 61" stroke="#b8bcbe" strokeWidth="3.200" />
        <circle cx="40" cy="40" r="3" fill="#b8bcbe" />
        <circle cx="40" cy="40" r="1.300" fill="#333" />
      </Tile>
    ),
  },
  {
    name: "反馈助理",
    art: (
      <Tile id="feed" stops={[[0, "#b85cd4"], [1, "#7c3ca0"]]}>
        <defs>
          <Lin id="feedI" stops={[[0, "#ca70e4"], [1, "#a44ccc"]]} />
        </defs>
        <rect x="4" y="4" width="72" height="72" rx="14" fill="url(#feedI)" />
        <path d="M23 21h34q7 0 7 7v22q0 7-7 7H38L28 66q-1 0-1-2v-7h-4q-7 0-7-7V28q0-7 7-7z" fill="#fff" />
        <path d="M37.500 27h5L41.500 43h-3z" fill="#a04cc8" stroke="#a04cc8" strokeLinejoin="round" />
        <circle cx="40" cy="48.500" r="2.800" fill="#a04cc8" />
      </Tile>
    ),
  },
];

const Trash = () => (
  <svg width="72" height="90" viewBox="0 0 72 90" aria-hidden="true">
    <defs>
      <Lin id="bin" v={[0, 0, 1, 0]} stops={[[0, "#e9e9ec"], [0.2, "#dfe0e3"], [0.8, "#d4d6d9"], [1, "#eeeef0"]]} />
      <Lin id="binIn" v={[0, 0, 1, 0]} stops={[[0, "#c8b2e4"], [0.5, "#c6b4e6"], [0.8, "#ccc0e2"], [1, "#c2a8e4"]]} />
    </defs>
    <path d="M0.500 9L9 76q1 13 27 13t27-13L71.500 9z" fill="url(#bin)" />
    <path d="M9 76q1 13 27 13t27-13q-4 6-27 6T9 76z" fill="#f0f0f2" opacity="0.700" />
    <ellipse cx="36" cy="9" rx="35.500" ry="8" fill="url(#binIn)" stroke="#ece6f4" strokeWidth="1.200" />
  </svg>
);

/* ---------- app ---------- */

export default function App() {
  const [active, setActive] = useState(1);
  return (
    <Desktop>
      <GlobalStyle />
      <Wallpaper />

      <MenuBar>
        <MenuGroup aria-label="菜单">
          <AppleLogo />
          <MenuButton $strong>FastZip</MenuButton>
          <MenuButton>编辑</MenuButton>
          <MenuButton>窗口</MenuButton>
        </MenuGroup>
        <StatusGroup>
          {statusIcons.map((s) => (
            <StatusItem key={s.name} $slot={s.slot} aria-label={s.name}>
              {s.art}
            </StatusItem>
          ))}
          <Clock>6月17日 周四 下午10:34</Clock>
        </StatusGroup>
      </MenuBar>

      <Stage>
        <Window aria-label="FastZip">
          <Sidebar>
            <TrafficLights>
              <Light $color="#fe5f57" aria-label="关闭" />
              <Light $color="#febb40" aria-label="最小化" />
              <Light $color="#35c84a" aria-label="缩放" />
            </TrafficLights>
            <About>
              <Bolt size={88} id="boltSide" />
              <Version>FastZip: 1.0.0</Version>
              <RateLink href="#rate">评分</RateLink>
            </About>
            <NavList aria-label="设置">
              {navItems.map((n, i) => (
                <NavItem key={n.label} $active={i === active} $spaced={n.spaced} onClick={() => setActive(i)}>
                  {n.icon}
                  <NavLabel>{n.label}</NavLabel>
                </NavItem>
              ))}
            </NavList>
          </Sidebar>

          <Panel>
            <TableFrame>
              <Table>
                <thead>
                  <tr>
                    <Th scope="col" $w={116} $divider $center>启用</Th>
                    <Th scope="col" $divider>功能</Th>
                    <Th scope="col" $w={118} $center>主菜单</Th>
                  </tr>
                </thead>
                <tbody>
                  {features.map((f) => (
                    <tr key={f}>
                      <Td $center>
                        <CenteredCheck defaultChecked aria-label={`启用 ${f}`} />
                      </Td>
                      <Td>{f}</Td>
                      <Td $center>
                        <CenteredCheck defaultChecked aria-label={`主菜单 ${f}`} />
                      </Td>
                    </tr>
                  ))}
                </tbody>
              </Table>
            </TableFrame>
            <OptionLabel htmlFor="show-icons">
              <CheckBox id="show-icons" defaultChecked />
              在右键菜单栏上显示图标
            </OptionLabel>
            <HelpLink href="#help">*右键菜单栏失效的解决方法&gt;&gt;</HelpLink>
          </Panel>
        </Window>
      </Stage>

      <Dock>
        <DockApps>
          {dockApps.map((a) => (
            <DockButton key={a.name} aria-label={a.name}>
              {a.art}
              {a.running && <RunningDot />}
            </DockButton>
          ))}
        </DockApps>
        <Divider $before={38} $after={34} />
        <DockButton $w={82} aria-label="FastZip">
          <Bolt size={82} id="boltDock" />
          <RunningDot />
        </DockButton>
        <Divider $before={40} $after={40} />
        <TrashButton $w={72} aria-label="废纸篓">
          <Trash />
        </TrashButton>
      </Dock>
    </Desktop>
  );
}
